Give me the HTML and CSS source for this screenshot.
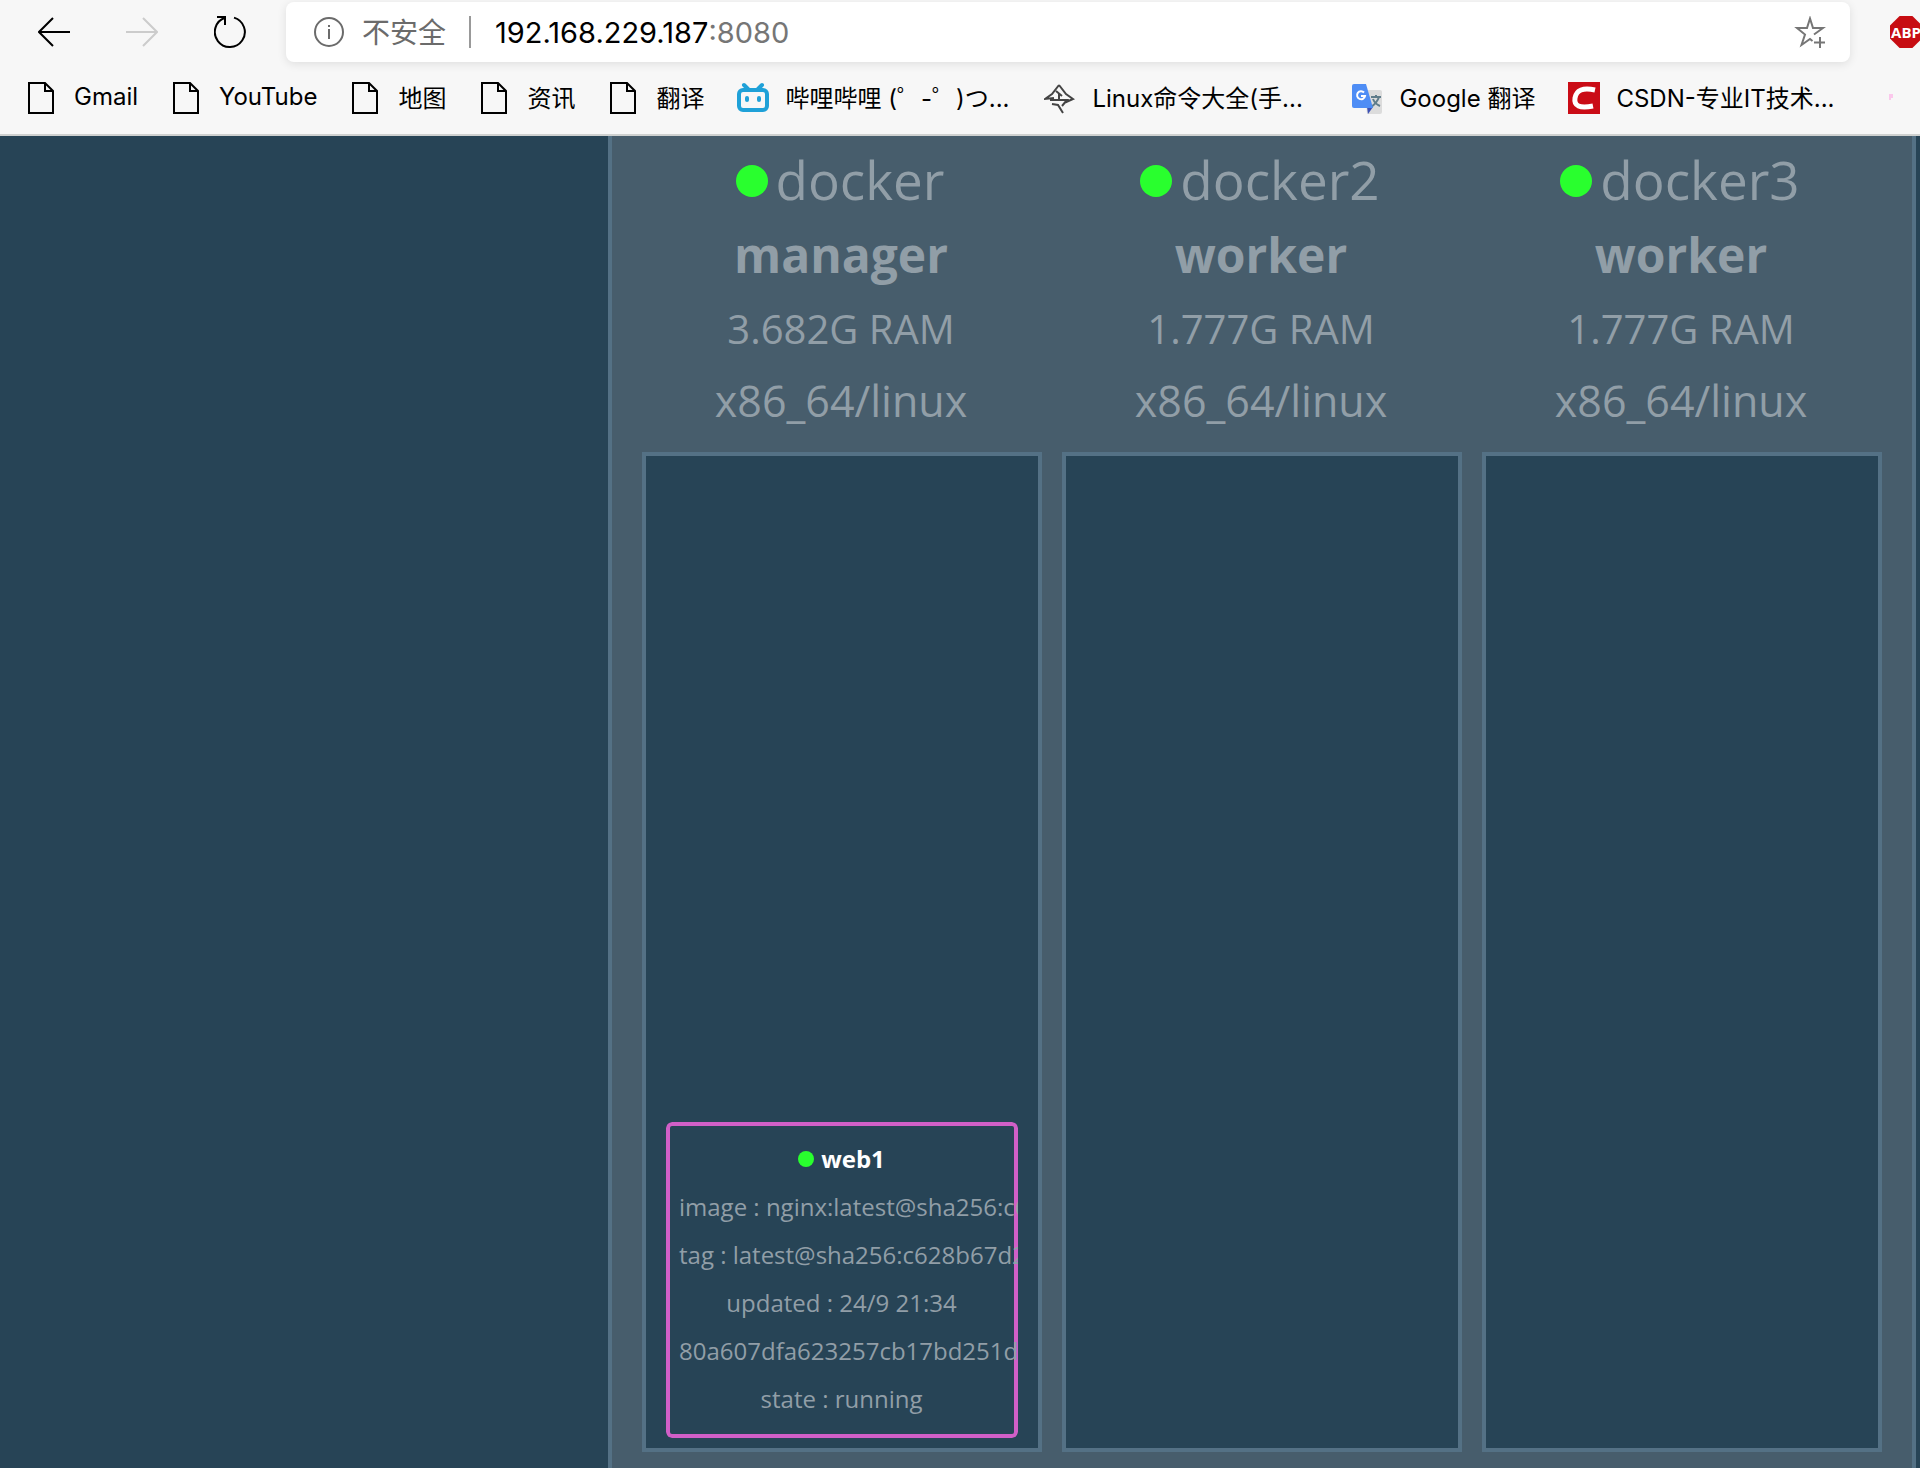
FILE: index.html
```html
<!DOCTYPE html>
<html lang="zh-CN">
<head>
<meta charset="utf-8">
<title>192.168.229.187:8080</title>
<link rel="stylesheet" href="styles.css">
</head>
<body>
<svg class="defs" aria-hidden="true">
  <symbol id="page" viewBox="0 0 32 32">
    <path d="M3 1H19L27 9V31H3ZM19 1V9H27" fill="none" stroke="#000" stroke-width="2"/>
  </symbol>
</svg>
<header class="browser">
  <div class="toolbar">
    <button class="tool" aria-label="Back"><svg viewBox="0 0 32 32"><path d="M15 2 1 16 15 30M1 16H32" fill="none" stroke="#000" stroke-width="2"/></svg></button>
    <button class="tool" aria-label="Forward" disabled><svg viewBox="0 0 32 32"><path d="M17 2 31 16 17 30M31 16H0" fill="none" stroke="#ccc" stroke-width="2"/></svg></button>
    <button class="tool" aria-label="Reload"><svg viewBox="0 0 32 32"><path d="M20 1.600A15 15 0 1 1 11 1.800M3 1H11V9" fill="none" stroke="#000" stroke-width="2"/></svg></button>
    <form class="address">
      <svg class="info" viewBox="0 0 32 32" aria-hidden="true"><circle cx="16" cy="16" r="14" fill="none" stroke="#6b6b6b" stroke-width="2"/><path d="M16 13V23M16 9V11" stroke="#6b6b6b" stroke-width="2"/></svg>
      <span class="insecure">不安全</span>
      <span class="divider"></span>
      <input class="host" type="text" aria-label="Address" value="192.168.229.187" size="14"><span class="port">:8080</span>
      <button class="tool star" type="button" aria-label="Add to favorites"><svg viewBox="0 0 32 32"><path d="M20 18.500 29 12H19L16 2.500 13 12H3L11 18.500 7.500 29 16 23 18.500 25M26 21V32M20 26.500H31" fill="none" stroke="#767676" stroke-width="2"/></svg></button>
    </form>
    <button class="abp" aria-label="Adblock Plus">ABP</button>
  </div>
  <nav class="bookmarks">
    <a href="#"><svg><use href="#page"/></svg><span>Gmail</span></a>
    <a href="#"><svg><use href="#page"/></svg><span>YouTube</span></a>
    <a href="#"><svg><use href="#page"/></svg><span>地图</span></a>
    <a href="#"><svg><use href="#page"/></svg><span>资讯</span></a>
    <a href="#"><svg><use href="#page"/></svg><span>翻译</span></a>
    <a href="#"><svg viewBox="0 0 32 32"><rect x="2" y="8" width="28" height="20" rx="4" fill="none" stroke="#1fa1d8" stroke-width="4"/><path d="M7 3 11 7M25 3 21 7" stroke="#1fa1d8" stroke-width="4" stroke-linecap="round"/><rect x="8" y="14" width="4" height="6" rx="2" fill="#1fa1d8"/><rect x="20" y="14" width="4" height="6" rx="2" fill="#1fa1d8"/></svg><span class="long">哔哩哔哩 (゜-゜)つ...</span></a>
    <a href="#"><svg viewBox="0 0 32 32"><path d="M15 3 8 12 1 17 10 16M15 3 22 12 29 17 20 21M12 9 18 14M6 18H23L18 24M15 12V17M8 22 14 23 19 31" fill="none" stroke="#444" stroke-width="2"/></svg><span class="long">Linux命令大全(手...</span></a>
    <a href="#"><svg viewBox="0 0 32 32"><path d="M14 8H29Q31 8 31 10V30Q31 32 29 32H16Z" fill="#dcdcdc"/><path d="M20 15H30M25 13V15M28 15Q26 21 20 25M22 17Q24 22 29 24" fill="none" stroke="#607d8b" stroke-width="2"/><path d="M16 25H22L17 32Z" fill="#3c51b5"/><path d="M3 2H15L22 26H3Q1 26 1 24V4Q1 2 3 2Z" fill="#4e8df5"/><path d="M13 10.500A4 4 0 1 0 14 14H10" fill="none" stroke="#fff" stroke-width="2"/></svg><span>Google 翻译</span></a>
    <a href="#"><svg viewBox="0 0 32 32"><path d="M0 0H32V32H0Z" fill="#ca0c16"/><path d="M27 8Q9 4 7 16 5 28 25 24" fill="none" stroke="#fff" stroke-width="5"/></svg><span class="long">CSDN-专业IT技术...</span></a>
    <a href="#" aria-label="Bookmark"><svg viewBox="0 0 32 32"><path d="M14 12H18V16H16V18H14Z" fill="#fbc8ec"/></svg></a>
  </nav>
</header>
<main class="board">
  <div class="cluster">
    <section class="node">
      <div class="meta">
        <h2 class="name"><i class="dot"></i><span>docker</span></h2>
        <p class="role">manager</p>
        <p class="ram">3.682G RAM</p>
        <p class="arch">x86_64/linux</p>
      </div>
      <div class="tasks">
        <article class="task">
          <h3><i class="dot small"></i>web1</h3>
          <p>image : nginx:latest@sha256:c6</p>
          <p>tag : latest@sha256:c628b67d2</p>
          <p>updated : 24/9 21:34</p>
          <p>80a607dfa623257cb17bd251d</p>
          <p>state : running</p>
        </article>
      </div>
    </section>
    <section class="node">
      <div class="meta">
        <h2 class="name"><i class="dot"></i><span>docker2</span></h2>
        <p class="role">worker</p>
        <p class="ram">1.777G RAM</p>
        <p class="arch">x86_64/linux</p>
      </div>
      <div class="tasks"></div>
    </section>
    <section class="node">
      <div class="meta">
        <h2 class="name"><i class="dot"></i><span>docker3</span></h2>
        <p class="role">worker</p>
        <p class="ram">1.777G RAM</p>
        <p class="arch">x86_64/linux</p>
      </div>
      <div class="tasks"></div>
    </section>
  </div>
</main>
</body>
</html>
```
FILE: styles.css
```css
* { box-sizing: border-box; }
body {
  margin: 0;
  min-height: 100vh;
  display: flex;
  flex-direction: column;
  overflow-x: hidden;
  background: #274456;
  font-family: "Open Sans", sans-serif;
}
h2, h3, p { margin: 0; }
button { border: 0; padding: 0; background: none; }
svg { display: block; flex: none; width: 32px; height: 32px; }
.defs { position: absolute; width: 0; height: 0; }

/* Browser chrome */
.browser {
  background: #f7f7f7;
  border-bottom: 2px solid #cfd1d0;
  font-family: Inter, "Noto Sans CJK SC", sans-serif;
  overflow: hidden;
}
.toolbar {
  display: flex;
  align-items: center;
  gap: 56px;
  padding: 2px 0 0 38px;
}
.tool { flex: none; }
.address {
  flex: 1;
  display: flex;
  align-items: center;
  height: 60px;
  margin-left: -16px;
  padding: 0 24px 0 27px;
  border-radius: 8px;
  background: #fff;
  box-shadow: 0 2px 10px rgba(0, 0, 0, .1);
  font-size: 29px;
}
.insecure { margin-left: 17px; padding-bottom: 2px; font-size: 28px; color: #6b6b6b; }
.divider { width: 2px; height: 32px; margin: 0 24px 0 23px; background: #999; }
.host {
  field-sizing: content;
  border: 0;
  padding: 0;
  background: none;
  font: inherit;
  color: #000;
}
.port { color: #767676; }
.star { margin-left: auto; }
.abp {
  flex: none;
  width: 32px;
  height: 32px;
  margin: 0 -2px 0 -16px;
  clip-path: polygon(30% 0, 70% 0, 100% 30%, 100% 70%, 70% 100%, 30% 100%, 0 70%, 0 30%);
  background: #c70d12;
  color: #fff;
  font: bold 15px "Open Sans", sans-serif;
}
.bookmarks {
  display: flex;
  align-items: center;
  gap: 33px;
  height: 72px;
  padding-left: 26px;
  font-size: 24px;
  white-space: nowrap;
}
.bookmarks a {
  display: flex;
  align-items: center;
  gap: 16px;
  color: #000;
  text-decoration: none;
}
.bookmarks span { padding-bottom: 3px; }
.long { width: 226px; }

/* Cluster */
.board { flex: 1; display: flex; justify-content: flex-end; padding-right: 4px; }
.cluster {
  display: flex;
  gap: 20px;
  padding: 0 30px 16px;
  border: solid #547185;
  border-width: 0 4px;
  background: #475d6c;
}
.node { display: flex; flex-direction: column; width: 400px; }
.meta {
  padding: 8px 2px 16px 0;
  text-align: center;
  color: #919ea7;
}
.name {
  display: flex;
  align-items: center;
  justify-content: center;
  gap: 8px;
  padding-right: 2px;
  font-size: 53px;
  font-weight: 400;
  line-height: 74px;
}
.name span { padding-bottom: 2px; line-height: 72px; }
.role { font-size: 48px; font-weight: 700; line-height: 74px; }
.ram { font-size: 40px; line-height: 74px; }
.arch { font-size: 43px; line-height: 70px; }
.dot { width: 32px; height: 32px; border-radius: 50%; background: #29ff2e; }
.small { width: 16px; height: 16px; }
.tasks {
  flex: 1;
  display: flex;
  flex-direction: column;
  justify-content: flex-end;
  padding: 10px 20px;
  border: 4px solid #547185;
  background: #274456;
}
.task {
  padding: 9px 10px 11px 9px;
  border: 4px solid #d15fc7;
  border-radius: 6px;
  clip-path: inset(0 round 6px);
  color: #919ea7;
  font-size: 24px;
  line-height: 48px;
  text-align: center;
  white-space: nowrap;
}
.task h3 {
  display: flex;
  align-items: center;
  justify-content: center;
  gap: 7px;
  font-size: 24px;
  color: #fff;
}
```
